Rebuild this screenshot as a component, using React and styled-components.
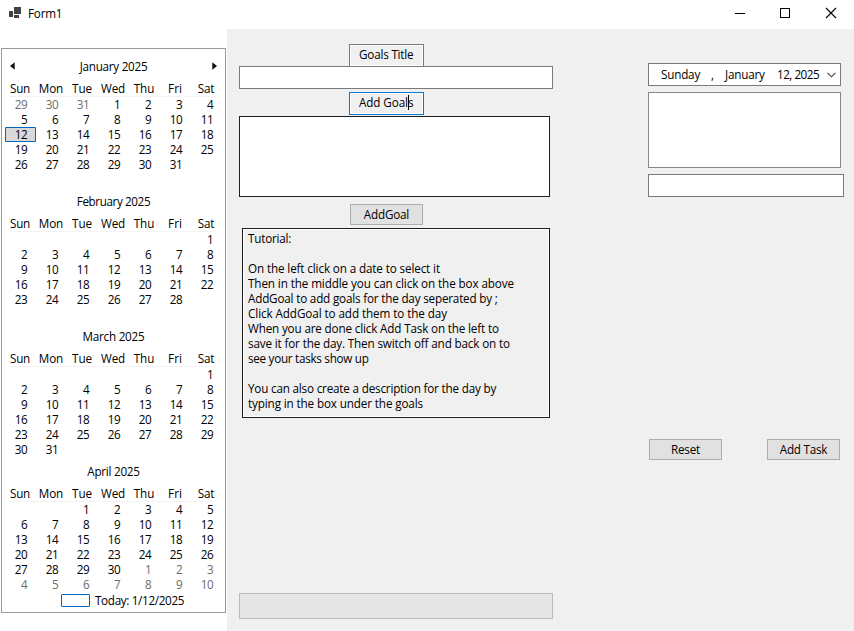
import React from "react";
import styled, { createGlobalStyle } from "styled-components";

const GlobalStyle = createGlobalStyle`
  * { box-sizing: border-box; }
  html, body { margin: 0; padding: 0; background: #f0f0f0; }
  body {
    font-family: "Open Sans", "Noto Sans", sans-serif;
    font-size: 11.7px;
    line-height: 15px;
    color: #000;
    overflow: hidden;
  }
`;

const Window = styled.div`
  display: flex;
  flex-direction: column;
  width: 854px;
  height: 631px;
  background: #f0f0f0;
`;

const TitleBar = styled.header`
  display: flex;
  flex: none;
  align-items: center;
  justify-content: space-between;
  height: 29px;
  padding: 0 17px 3px 9px;
  background: #fff;
`;

const TitleGroup = styled.div`
  display: flex;
  align-items: center;
  gap: 7px;
  padding-top: 1px;

  svg { margin-top: -2px; }
`;

const WindowControls = styled.div`
  display: flex;
  align-items: center;
  gap: 33px;

  svg:last-child { margin-left: 1px; }
`;

const Text = styled.span`
  display: block;
  white-space: pre;
  letter-spacing: ${(p) => p.$spacing ?? -0.2}px;
`;

const Body = styled.main`
  display: flex;
  flex: 1;
`;

const Sidebar = styled.aside`
  flex: none;
  width: 227px;
  padding: 19px 1px 0;
  background: #fff;
`;

const Calendar = styled.section`
  width: 225px;
  height: 565px;
  padding: 10px 3px 0;
  border: 1px solid #9a9a9a;
`;

const Month = styled.div`
  height: 135px;
`;

const MonthHeader = styled.div`
  display: flex;
  align-items: center;
  justify-content: space-between;
  height: 15px;
  margin-bottom: 7px;
  padding: 0 5px;

  svg { margin-top: -2px; }
`;

const Weekdays = styled.div`
  display: grid;
  grid-template-columns: repeat(7, 31px);
  height: 15px;
  justify-items: center;
`;

const Weekday = styled(Text)`
  margin-left: -1px;
`;

const Rule = styled.div`
  height: 1px;
  margin: 0 5px 0 4px;
  background: #f3f3f3;
`;

const Days = styled.div`
  display: grid;
  grid-template-columns: repeat(7, 31px);
  grid-auto-rows: 15px;
`;

const Day = styled.div`
  padding-right: 9px;
  text-align: right;
  letter-spacing: -0.6px;
  color: ${(p) => (p.$muted ? "#6d6d6d" : "#000")};
  ${(p) =>
    p.$selected &&
    `background: #d9d9d9; border-radius: 1px; box-shadow: inset 0 0 0 1px #0067c0;`}
`;

const Today = styled.div`
  display: flex;
  align-items: center;
  gap: 5px;
  height: 15px;
  margin: -6px 0 0 56px;
`;

const TodayMark = styled.div`
  width: 29px;
  height: 13px;
  border: 1px solid #0067c0;
  border-radius: 1px;
`;

const Middle = styled.section`
  display: flex;
  flex: none;
  flex-direction: column;
  width: 326px;
  padding: 15px 0 0 12px;
`;

const Field = styled.div`
  flex: none;
  width: ${(p) => p.$width}px;
  height: ${(p) => p.$height ?? 23}px;
  margin-top: ${(p) => p.$top ?? 0}px;
  border: 1px solid ${(p) => p.$border ?? "#7a7a7a"};
  background: ${(p) => p.$fill ?? "#fff"};
`;

const Caption = styled.div`
  display: flex;
  flex: none;
  position: relative;
  width: 75px;
  height: ${(p) => (p.$focused ? 23 : 22)}px;
  margin: ${(p) => (p.$focused ? 3 : 0)}px 0 0 110px;
  padding: 2px 0 0 9px;
  border: 1px solid ${(p) => (p.$focused ? "#0078d7" : "#7a7a7a")};
  border-bottom-width: ${(p) => (p.$focused ? 1 : 0)}px;
  box-shadow: inset 0 0 0 1px #fff;
`;

const Caret = styled.i`
  position: absolute;
  left: 58px;
  top: 2px;
  width: 1px;
  height: 15px;
  background: #000;
`;

const Button = styled.button`
  display: flex;
  flex: none;
  align-items: center;
  justify-content: center;
  width: 73px;
  height: 21px;
  margin: ${(p) => p.$margin ?? "0"};
  padding: 0;
  border: 1px solid #adadad;
  background: #e1e1e1;
  color: #000;
  font: inherit;
`;

const Tutorial = styled.div`
  flex: none;
  width: 308px;
  height: 190px;
  margin: 3px 0 0 3px;
  padding: 2px 5px;
  border: 1px solid #1e1e1e;
  box-shadow: inset 0 0 0 1px #fff;
`;

const Line = styled(Text)`
  height: 15px;
`;

const Right = styled.section`
  display: flex;
  flex-direction: column;
  padding: 34px 0 0 95px;
`;

const DatePicker = styled.div`
  display: flex;
  align-items: center;
  width: 193px;
  height: 23px;
  padding: 0 4px 0 12px;
  border: 1px solid #7a7a7a;
  background: #fff;

  svg { margin-left: auto; }
`;

const DatePart = styled(Text)`
  flex: none;
  width: ${(p) => p.$width}px;
`;

const Actions = styled.div`
  display: flex;
  gap: 45px;
  margin: 242px 0 0 1px;
`;

const WEEKDAYS = [
  ["Sun", -0.2],
  ["Mon", -0.1],
  ["Tue", -0.1],
  ["Wed", -0.25],
  ["Thu", -0.1],
  ["Fri", 0],
  ["Sat", -0.2],
];

const MONTHS = [
  { name: "January 2025", spacing: -0.26, offset: 3, length: 31, lead: [29, 30, 31], selected: 12 },
  { name: "February 2025", spacing: -0.4, offset: 6, length: 28 },
  { name: "March 2025", spacing: -0.25, offset: 6, length: 31 },
  { name: "April 2025", spacing: -0.26, offset: 2, length: 30, trail: 10 },
];

const TUTORIAL = [
  ["Tutorial:", -0.2],
  [""],
  ["On the left click on a date to select it", -0.13],
  ["Then in the middle you can click on the box above", -0.11],
  ["AddGoal to add goals for the day seperated by ;", -0.19],
  ["Click AddGoal to add them to the day", -0.09],
  ["When you are done click Add Task on the left to", -0.16],
  ["save it for the day. Then switch off and back on to", -0.15],
  ["see your tasks show up", -0.28],
  [""],
  ["You can also create a description for the day by", -0.19],
  ["typing in the box under the goals", -0.13],
];

function Arrow({ flip, hidden }) {
  return (
    <svg width="5" height="8" viewBox="0 0 5 8" visibility={hidden ? "hidden" : "visible"}>
      <path d={flip ? "M0.3 0.2 L5 4 L0.3 7.8Z" : "M4.7 0.2 L0 4 L4.7 7.8Z"} fill="#111" />
    </svg>
  );
}

function MonthView({ month, first }) {
  const lead = month.lead ?? Array(month.offset).fill("");
  const days = Array.from({ length: month.length }, (_, i) => i + 1);
  const trail = Array.from({ length: month.trail ?? 0 }, (_, i) => i + 1);
  return (
    <Month>
      <MonthHeader>
        <Arrow hidden={!first} />
        <Text $spacing={month.spacing}>{month.name}</Text>
        <Arrow flip hidden={!first} />
      </MonthHeader>
      <Weekdays>
        {WEEKDAYS.map(([d, s]) => (
          <Weekday key={d} $spacing={s}>{d}</Weekday>
        ))}
      </Weekdays>
      <Rule />
      <Days>
        {lead.map((d, i) => <Day key={`l${i}`} $muted>{d}</Day>)}
        {days.map((d) => <Day key={d} $selected={d === month.selected}>{d}</Day>)}
        {trail.map((d) => <Day key={`t${d}`} $muted>{d}</Day>)}
      </Days>
    </Month>
  );
}

export default function App() {
  return (
    <Window>
      <GlobalStyle />
      <TitleBar>
        <TitleGroup>
          <svg width="12" height="11" viewBox="0 0 12 11" fill="#424242" shapeRendering="crispEdges">
            <rect x="0" y="4" width="4" height="6" />
            <rect x="5" y="0" width="7" height="7" />
            <rect x="5" y="8" width="5" height="3" />
          </svg>
          <Text $spacing={-0.2}>Form1</Text>
        </TitleGroup>
        <WindowControls>
          <svg width="12" height="12" viewBox="0 0 12 12" shapeRendering="crispEdges">
            <rect x="1" y="6" width="10" height="1" fill="#000" />
          </svg>
          <svg width="12" height="12" viewBox="0 0 12 12" shapeRendering="crispEdges">
            <rect x="1.5" y="1.5" width="9" height="9" fill="none" stroke="#000" />
          </svg>
          <svg width="12" height="12" viewBox="0 0 12 12">
            <path d="M1 1 L11 11 M11 1 L1 11" stroke="#000" strokeWidth="1.1" />
          </svg>
        </WindowControls>
      </TitleBar>
      <Body>
        <Sidebar>
          <Calendar>
            {MONTHS.map((m, i) => <MonthView key={m.name} month={m} first={i === 0} />)}
            <Today>
              <TodayMark />
              <Text $spacing={-0.33}>Today: 1/12/2025</Text>
            </Today>
          </Calendar>
        </Sidebar>
        <Middle>
          <Caption><Text $spacing={-0.2}>Goals Title</Text></Caption>
          <Field $width={314} />
          <Caption $focused>
            <Text $spacing={-0.1}>Add Goals</Text>
            <Caret />
          </Caption>
          <Field $width={311} $height={81} $top={1} $border="#1e1e1e" />
          <Button $margin="7px 0 0 111px"><Text>AddGoal</Text></Button>
          <Tutorial>
            {TUTORIAL.map(([t, s], i) => <Line key={i} $spacing={s}>{t}</Line>)}
          </Tutorial>
          <Field $width={314} $height={26} $top={175} $border="#bcbcbc" $fill="#e6e6e6" />
        </Middle>
        <Right>
          <DatePicker>
            <DatePart $width={50}>Sunday</DatePart>
            <DatePart $width={14}>,</DatePart>
            <DatePart $width={52}>January</DatePart>
            <DatePart $width={43} $spacing={-0.5}>12, 2025</DatePart>
            <svg width="9" height="6" viewBox="0 0 9 6" fill="none" stroke="#444" strokeWidth="1.1">
              <path d="M0.5 0.8 L4.5 4.8 L8.5 0.8" />
            </svg>
          </DatePicker>
          <Field $width={193} $height={76} $top={6} $border="#828790" />
          <Field $width={196} $top={6} />
          <Actions>
            <Button><Text>Reset</Text></Button>
            <Button><Text $spacing={-0.25}>Add Task</Text></Button>
          </Actions>
        </Right>
      </Body>
    </Window>
  );
}
